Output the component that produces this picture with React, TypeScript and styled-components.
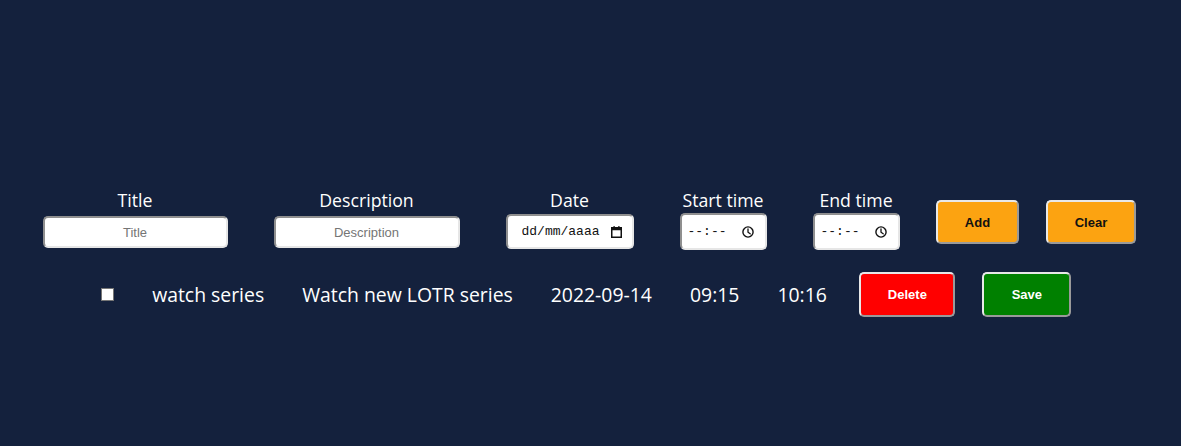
import styled, { createGlobalStyle } from 'styled-components';

const GlobalStyle = createGlobalStyle`
  html, body {
    margin: 0;
    padding: 0;
    background-color: #14213d;
  }
  body {
    font-family: 'Open Sans', 'Noto Sans', sans-serif;
    color: #ffffff;
  }
`;

const CalendarIcon = () => (
  <svg width="11" height="12" viewBox="0 0 11 12" fill="none">
    <rect x="0.75" y="1.75" width="9.5" height="9.5" stroke="#111" strokeWidth="1.5" />
    <rect x="0.75" y="1.75" width="9.5" height="2.5" fill="#111" />
    <rect x="2.5" y="0" width="1.2" height="2" fill="#111" />
    <rect x="7.3" y="0" width="1.2" height="2" fill="#111" />
  </svg>
);

const ClockIcon = () => (
  <svg width="12" height="12" viewBox="0 0 12 12" fill="none">
    <circle cx="6" cy="6" r="5.1" stroke="#111" strokeWidth="1.4" />
    <path d="M6 3v3.2l2.2 1.6" stroke="#111" strokeWidth="1.3" strokeLinecap="round" />
  </svg>
);

export default function App() {
  return (
    <>
      <GlobalStyle />
      <Page>
        <FormRow>
          <FieldColumn $width={185}>
            <Label>Title</Label>
            <TextInput placeholder="Title" $top={4} />
          </FieldColumn>
          <FieldColumn $width={186}>
            <Label>Description</Label>
            <TextInput placeholder="Description" $top={4} />
          </FieldColumn>
          <FieldColumn $width={128}>
            <Label>Date</Label>
            <PickerBox $height={35} $top={2} $left={14} $right={10}>
              <PickerInput placeholder="dd/mm/aaaa" $chars={10} />
              <CalendarIcon />
            </PickerBox>
          </FieldColumn>
          <FieldColumn $width={87}>
            <Label>Start time</Label>
            <PickerBox $height={37} $top={1} $left={6} $right={11}>
              <PickerInput placeholder="--:--" $chars={5} />
              <ClockIcon />
            </PickerBox>
          </FieldColumn>
          <FieldColumn $width={87}>
            <Label>End time</Label>
            <PickerBox $height={37} $top={1} $left={6} $right={11}>
              <PickerInput placeholder="--:--" $chars={5} />
              <ClockIcon />
            </PickerBox>
          </FieldColumn>
          <Button $bg="#fca311" $color="#111111" $width={83}>Add</Button>
          <Button $bg="#fca311" $color="#111111" $width={90}>Clear</Button>
        </FormRow>

        <TodoRow>
          <Check type="checkbox" />
          <Cell>watch series</Cell>
          <Cell>Watch new LOTR series</Cell>
          <Cell>2022-09-14</Cell>
          <Cell>09:15</Cell>
          <Cell>10:16</Cell>
          <Button $bg="#ff0000" $color="#ffffff" $width={96} $height={45}>Delete</Button>
          <Button $bg="#008000" $color="#ffffff" $width={89} $height={45}>Save</Button>
        </TodoRow>
      </Page>
    </>
  );
}

const Page = styled('div')`
  min-height: 100vh;
  padding-top: 188px;
  box-sizing: border-box;
  display: flex;
  flex-direction: column;
  gap: 22px;
`;

const FormRow = styled('div')`
  display: flex;
  justify-content: center;
  align-items: flex-start;
  padding-right: 12px;
`;

const FieldColumn = styled('div')<{ $width: number }>`
  display: flex;
  flex-direction: column;
  align-items: center;
  width: ${({ $width }) => $width}px;
  margin: 0 23px;
`;

const Label = styled('span')`
  font-size: 17.7px;
  line-height: 24px;
  white-space: nowrap;
`;

const TextInput = styled('input')<{ $top: number }>`
  box-sizing: border-box;
  width: 100%;
  height: 32px;
  margin-top: ${({ $top }) => $top}px;
  border-radius: 5px;
  border: 2px solid;
  border-color: #8f8f8f #e6e6e6 #e6e6e6 #8f8f8f;
  background: #ffffff;
  text-align: center;
  font-family: 'Liberation Sans', Arial, sans-serif;
  font-size: 13px;
  color: #111;
  outline: none;

  &::placeholder {
    color: #757575;
  }
`;

const PickerBox = styled('label')<{ $height: number; $top: number; $left: number; $right: number }>`
  box-sizing: border-box;
  width: 100%;
  height: ${({ $height }) => $height}px;
  margin-top: ${({ $top }) => $top}px;
  display: flex;
  align-items: center;
  justify-content: space-between;
  padding: 0 ${({ $right }) => $right}px 0 ${({ $left }) => $left}px;
  border-radius: 5px;
  border: 2px solid;
  border-color: #8f8f8f #e6e6e6 #e6e6e6 #8f8f8f;
  background: #ffffff;

  svg {
    flex-shrink: 0;
  }
`;

const PickerInput = styled('input')<{ $chars: number }>`
  width: ${({ $chars }) => $chars * 7.8 + 2}px;
  border: none;
  padding: 0;
  outline: none;
  background: transparent;
  font-family: 'Liberation Mono', 'DejaVu Sans Mono', monospace;
  font-size: 13px;

  &::placeholder {
    color: #111111;
  }
`;

const Button = styled('button')<{ $bg: string; $color: string; $width: number; $height?: number }>`
  box-sizing: border-box;
  width: ${({ $width }) => $width}px;
  height: ${({ $height }) => $height ?? 44}px;
  margin: 12px 13.5px 0;
  border-radius: 5px;
  border: 2px solid;
  border-color: #e8e8e8 #9a9a9a #9a9a9a #e8e8e8;
  background-color: ${({ $bg }) => $bg};
  color: ${({ $color }) => $color};
  font-family: 'Liberation Sans', Arial, sans-serif;
  font-size: 13px;
  font-weight: 700;
  cursor: pointer;
`;

const TodoRow = styled('div')`
  display: flex;
  justify-content: center;
  align-items: center;
  padding-right: 14px;

  ${Button} {
    margin-top: 0;
  }
`;

const Check = styled('input')`
  appearance: none;
  box-sizing: border-box;
  width: 13px;
  height: 13px;
  margin: 0 19px;
  background: #ffffff;
  border: 1px solid #767676;
`;

const Cell = styled('span')`
  font-size: 19.4px;
  line-height: 28px;
  margin: 0 19px;
  white-space: nowrap;
`;
